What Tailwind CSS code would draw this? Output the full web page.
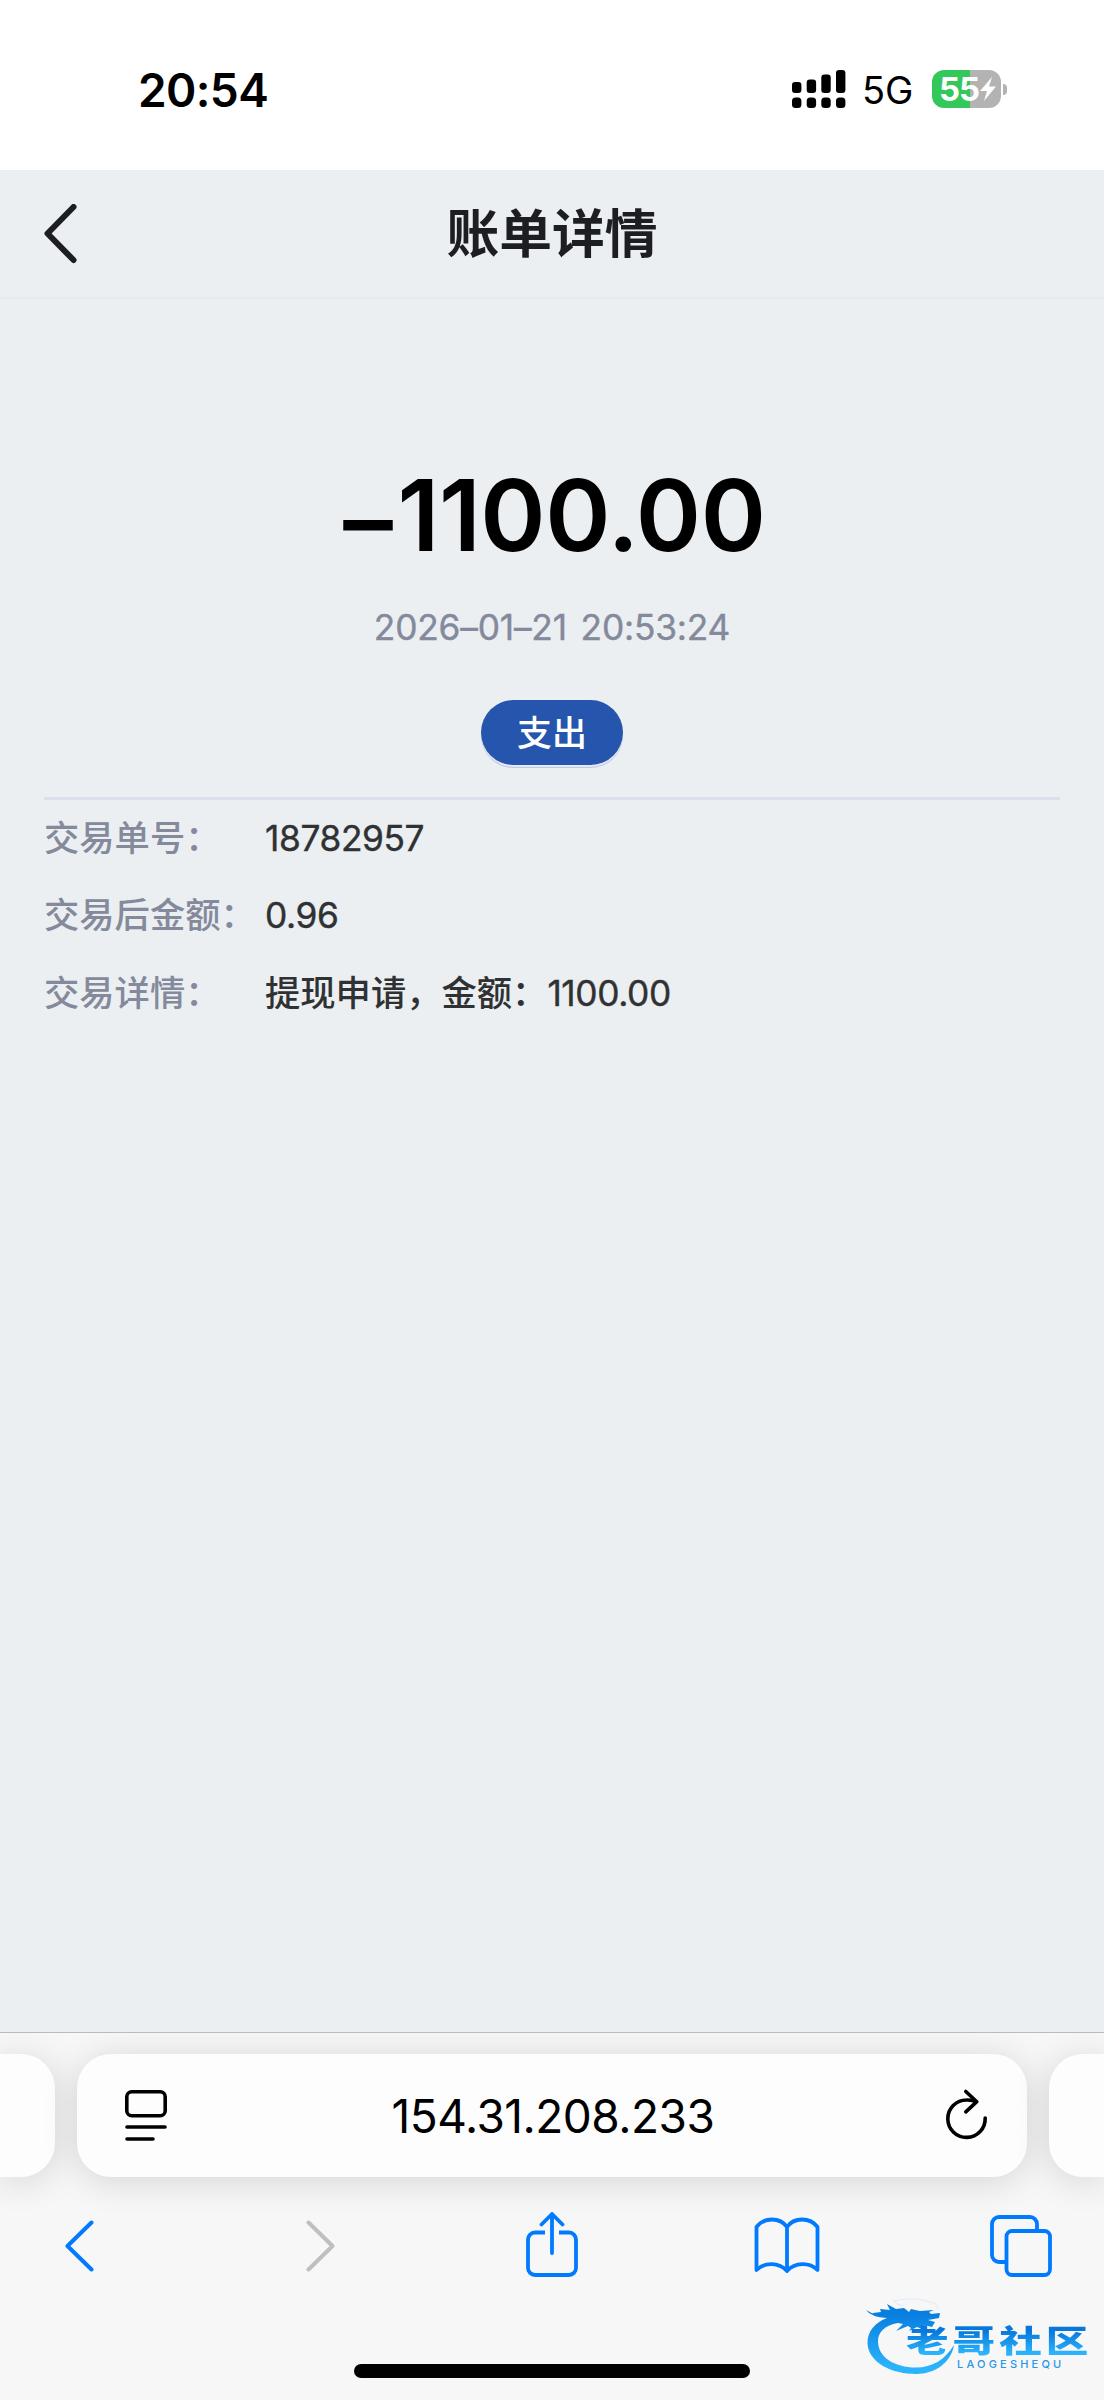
<!DOCTYPE html>
<html lang="zh-CN">

<head>
    <meta charset="UTF-8" />
    <meta name="viewport" content="width=device-width, initial-scale=1.0" />
    <title>账单详情</title>
    <script src="https://cdn.jsdelivr.net/npm/@tailwindcss/browser@4"></script>
</head>

<body class="bg-[#ebeff2] w-[1104px] h-[2400px] overflow-hidden flex flex-col font-['Inter','Noto_Sans_CJK_SC',sans-serif]">

    <!-- Status bar -->
    <div class="h-[170px] shrink-0 bg-white flex items-start justify-between pl-[138px] pr-[97px] pt-[62px]">
        <div class="text-[46px] leading-[56px] font-semibold tracking-[-0.6px] text-black">20:54</div>
        <div class="flex items-center h-[54px]">
            <svg class="w-[54px] h-[38px]" viewBox="0 0 54 38" fill="#000">
                <rect x="0" y="12" width="9.4" height="11" rx="3" />
                <rect x="14.7" y="9.5" width="9.4" height="13.5" rx="3" />
                <rect x="29.3" y="4.5" width="9.4" height="18.5" rx="3" />
                <rect x="44" y="0" width="9.4" height="23" rx="3" />
                <rect x="0" y="27.5" width="9.4" height="10.5" rx="3.5" />
                <rect x="14.7" y="27.5" width="9.4" height="10.5" rx="3.5" />
                <rect x="29.3" y="27.5" width="9.4" height="10.5" rx="3.5" />
                <rect x="44" y="27.5" width="9.4" height="10.5" rx="3.5" />
            </svg>
            <div class="ml-[16px] w-[70px] text-[38px] leading-none text-black pt-[2px]">5G</div>
            <div class="w-[69px] h-[38px] rounded-[12px] bg-linear-to-r from-[#34c759] from-55% to-[#b3b3b3] to-55% flex items-center pl-[7px] text-white">
                <span class="text-[33px] leading-none font-bold tracking-[-1.2px]">55</span>
                <svg class="ml-[1px] w-[16px] h-[24px] shrink-0" viewBox="0 0 16 24" fill="#fff">
                    <path d="M12 0 0 14h7L4 24 16 9.5H9z" />
                </svg>
            </div>
            <div class="ml-[2px] w-[4px] h-[11px] rounded-r-full bg-[#b3b3b3]"></div>
        </div>
    </div>

    <!-- Title bar -->
    <header class="h-[129px] shrink-0 border-b-2 border-[#e5e9f3] grid grid-cols-[120px_1fr_120px] items-center">
        <svg class="ml-[44px] w-[34px] h-[60px]" viewBox="0 0 34 60" fill="none" stroke="#1d1e21" stroke-width="6" stroke-linecap="round" stroke-linejoin="round">
            <path d="M29.5 3 3.5 29.5 29.5 56" />
        </svg>
        <h1 class="text-center text-[52.8px] leading-[72px] font-semibold text-[#1d1e21]">账单详情</h1>
    </header>

    <!-- Bill -->
    <main class="grow px-[44px] pt-[156px]">
        <div class="flex flex-col items-center">
            <div class="ml-[5px] flex text-[99px] leading-[120px] font-semibold tracking-[-0.4px] text-black [font-feature-settings:'calt'_0]">
                <span class="mr-[5px] translate-y-[4px]">–</span>
                <span>1100.00</span>
            </div>
            <div class="mt-[31px] text-[35.3px] leading-[44px] tracking-[-0.2px] [word-spacing:4px] [-webkit-text-stroke:0.4px_#848a9b] text-[#848a9b] [font-feature-settings:'calt'_0]">2026–01–21 20:53:24</div>
            <div class="mt-[50px] w-[142px] h-[65px] rounded-full bg-[#2555ad] shadow-[0_2px_0_#e6e9f4,0_3px_0_#bcc8e4] text-white text-[35px] leading-[66px] font-medium text-center">支出</div>
        </div>
        <dl class="mt-[32px] border-t-[3px] border-[#dbe1ec] grid grid-cols-[221px_1fr] auto-rows-[77.5px] items-center text-[35.3px] leading-[54px]">
            <dt class="text-[#848a9b] font-medium">交易单号：</dt>
            <dd class="text-[#303133] tracking-[-0.4px] [-webkit-text-stroke:0.4px_#303133]">18782957</dd>
            <dt class="text-[#848a9b] font-medium">交易后金额：</dt>
            <dd class="text-[#303133] tracking-[-0.4px] [-webkit-text-stroke:0.4px_#303133]">0.96</dd>
            <dt class="text-[#848a9b] font-medium">交易详情：</dt>
            <dd class="text-[#303133] font-medium">提现申请，金额：<span class="font-normal tracking-[-0.4px] [-webkit-text-stroke:0.4px_#303133]">1100.00</span></dd>
        </dl>
    </main>

    <!-- Browser toolbar -->
    <footer class="relative h-[368px] shrink-0 border-t border-[#b9bbbd] bg-[#f7f7f7] overflow-hidden">
        <div class="mt-[21px] flex justify-between h-[123px]">
            <div class="w-[55px] rounded-r-[34px] bg-[#fdfdfd] shadow-[0_4px_36px_rgba(0,0,0,0.14)]"></div>
            <div class="w-[950px] rounded-[34px] bg-[#fdfdfd] shadow-[0_4px_36px_rgba(0,0,0,0.14)] flex items-center justify-between pl-[48px] pr-[39px]">
                <svg class="mt-[1px] w-[42px] h-[52px]" viewBox="0 0 42 52" fill="none" stroke="#000" stroke-width="3.6" stroke-linecap="round">
                    <rect x="1.8" y="1.8" width="38.4" height="24" rx="5" />
                    <path d="M2 37h38M2 49h26" />
                </svg>
                <div class="-ml-[7px] text-[46px] leading-[56px] tracking-[-0.5px] text-black">154.31.208.233</div>
                <svg class="w-[42px] h-[52px] overflow-visible" viewBox="0 0 42 52" fill="none" stroke="#000" stroke-width="3.6" stroke-linecap="round" stroke-linejoin="round">
                    <path d="M39.2 28A18.7 18.7 0 1 1 20.5 10Q26 9.8 30.5 11.7M19.8 1.5 30.8 11.7 19.8 21.8" />
                </svg>
            </div>
            <div class="w-[55px] rounded-l-[34px] bg-[#fdfdfd] shadow-[0_4px_36px_rgba(0,0,0,0.14)]"></div>
        </div>

        <div class="mt-[35px] pl-[64px] h-[66px] flex items-center">
            <svg class="w-[30px] h-[54px]" viewBox="0 0 30 54" fill="none" stroke="#007aff" stroke-width="4" stroke-linecap="round" stroke-linejoin="round">
                <path d="M27.5 4.5 3.5 28 27.5 51.5" />
            </svg>
            <svg class="ml-[211px] w-[30px] h-[54px]" viewBox="0 0 30 54" fill="none" stroke="#bfbfbf" stroke-width="4" stroke-linecap="round" stroke-linejoin="round">
                <path d="M3.5 4.5 27.5 28 3.5 51.5" />
            </svg>
            <svg class="ml-[191px] w-[52px] h-[66px]" viewBox="0 0 52 66" fill="none" stroke="#007aff" stroke-width="3.8" stroke-linecap="round" stroke-linejoin="round">
                <path d="M26 41V2M15.5 12.5 26 2 36.500 12.5" />
                <path stroke-linecap="butt" d="M19 20.5H9a7 7 0 0 0-7 7v28.5a7 7 0 0 0 7 7h34a7 7 0 0 0 7-7V27.5a7 7 0 0 0-7-7h-10" />
            </svg>
            <svg class="ml-[176px] w-[66px] h-[56px]" viewBox="0 0 66 56" fill="none" stroke="#007aff" stroke-width="3.8" stroke-linecap="round" stroke-linejoin="round">
                <path d="M33 10C26 0 10 0 2.5 10v43c8-8 22.5-8 30.5 1 8-9 22.5-9 30.5-1V10C56 0 40 0 33 10zV54" />
            </svg>
            <svg class="mt-[2px] ml-[170px] w-[62px] h-[62px]" viewBox="0 0 62 62" fill="none" stroke="#007aff" stroke-width="3.8">
                <rect x="16.5" y="16" width="43.5" height="44" rx="5.5" />
                <path d="M16 47H9a7 7 0 0 1-7-7V9a7 7 0 0 1 7-7h31a7 7 0 0 1 7 7v7" />
            </svg>
        </div>

        <!-- Home indicator -->
        <div class="absolute left-[354px] bottom-[22px] w-[396px] h-[14px] rounded-full bg-black"></div>

        <!-- Community watermark -->
        <div class="absolute left-[864px] bottom-[24px] w-[226px] h-[80px]">
            <svg class="absolute inset-0 w-full h-full overflow-visible" viewBox="0 0 226 80">
                <defs>
                    <linearGradient id="logo" x1="0" y1="0" x2="0" y2="1">
                        <stop offset="0.15" stop-color="#087fe0" />
                        <stop offset="0.9" stop-color="#2bb4fb" />
                    </linearGradient>
                </defs>
                <path fill="url(#logo)" d="M23 22C10 27 3.5 36 3.5 47 4 66 27 78 52 78c20 0 35-12 38-29-9 15-22 22.5-38 22.5-22 0-38-10.5-38-26.5 0-9 7-16 20-18l5 1-7 7 12-5 3 2-2 3 8-4 5 2 2-4 8 2 3-5-7-2 11-2 1-5-9 1-2-2 5-2-14 1-9-2-2 3-5-4-8 1-9-5 3 6-10-1 1 3-8 1Q11 19 2 14q5 7 21 8z" />
                <path d="M30 5c8-2 22-4 36 1 6 1 8 4 8 8M30 5q3 4 8 5" fill="none" stroke="#dcebf7" stroke-width="1" />
            </svg>
            <div class="absolute left-[42px] top-[24px] text-[38px] leading-[42px] font-black tracking-[3.6px] whitespace-nowrap text-transparent bg-clip-text bg-linear-to-b from-[#0878dc] from-20% to-[#2bb4fb] to-85% origin-left scale-x-[1.12] scale-y-[0.8]">老哥社区</div>
            <div class="absolute left-[93px] top-[62px] text-[11px] leading-[12px] font-medium tracking-[3.2px] whitespace-nowrap text-[#2697ea]">LAOGESHEQU</div>
        </div>
    </footer>
</body>

</html>
